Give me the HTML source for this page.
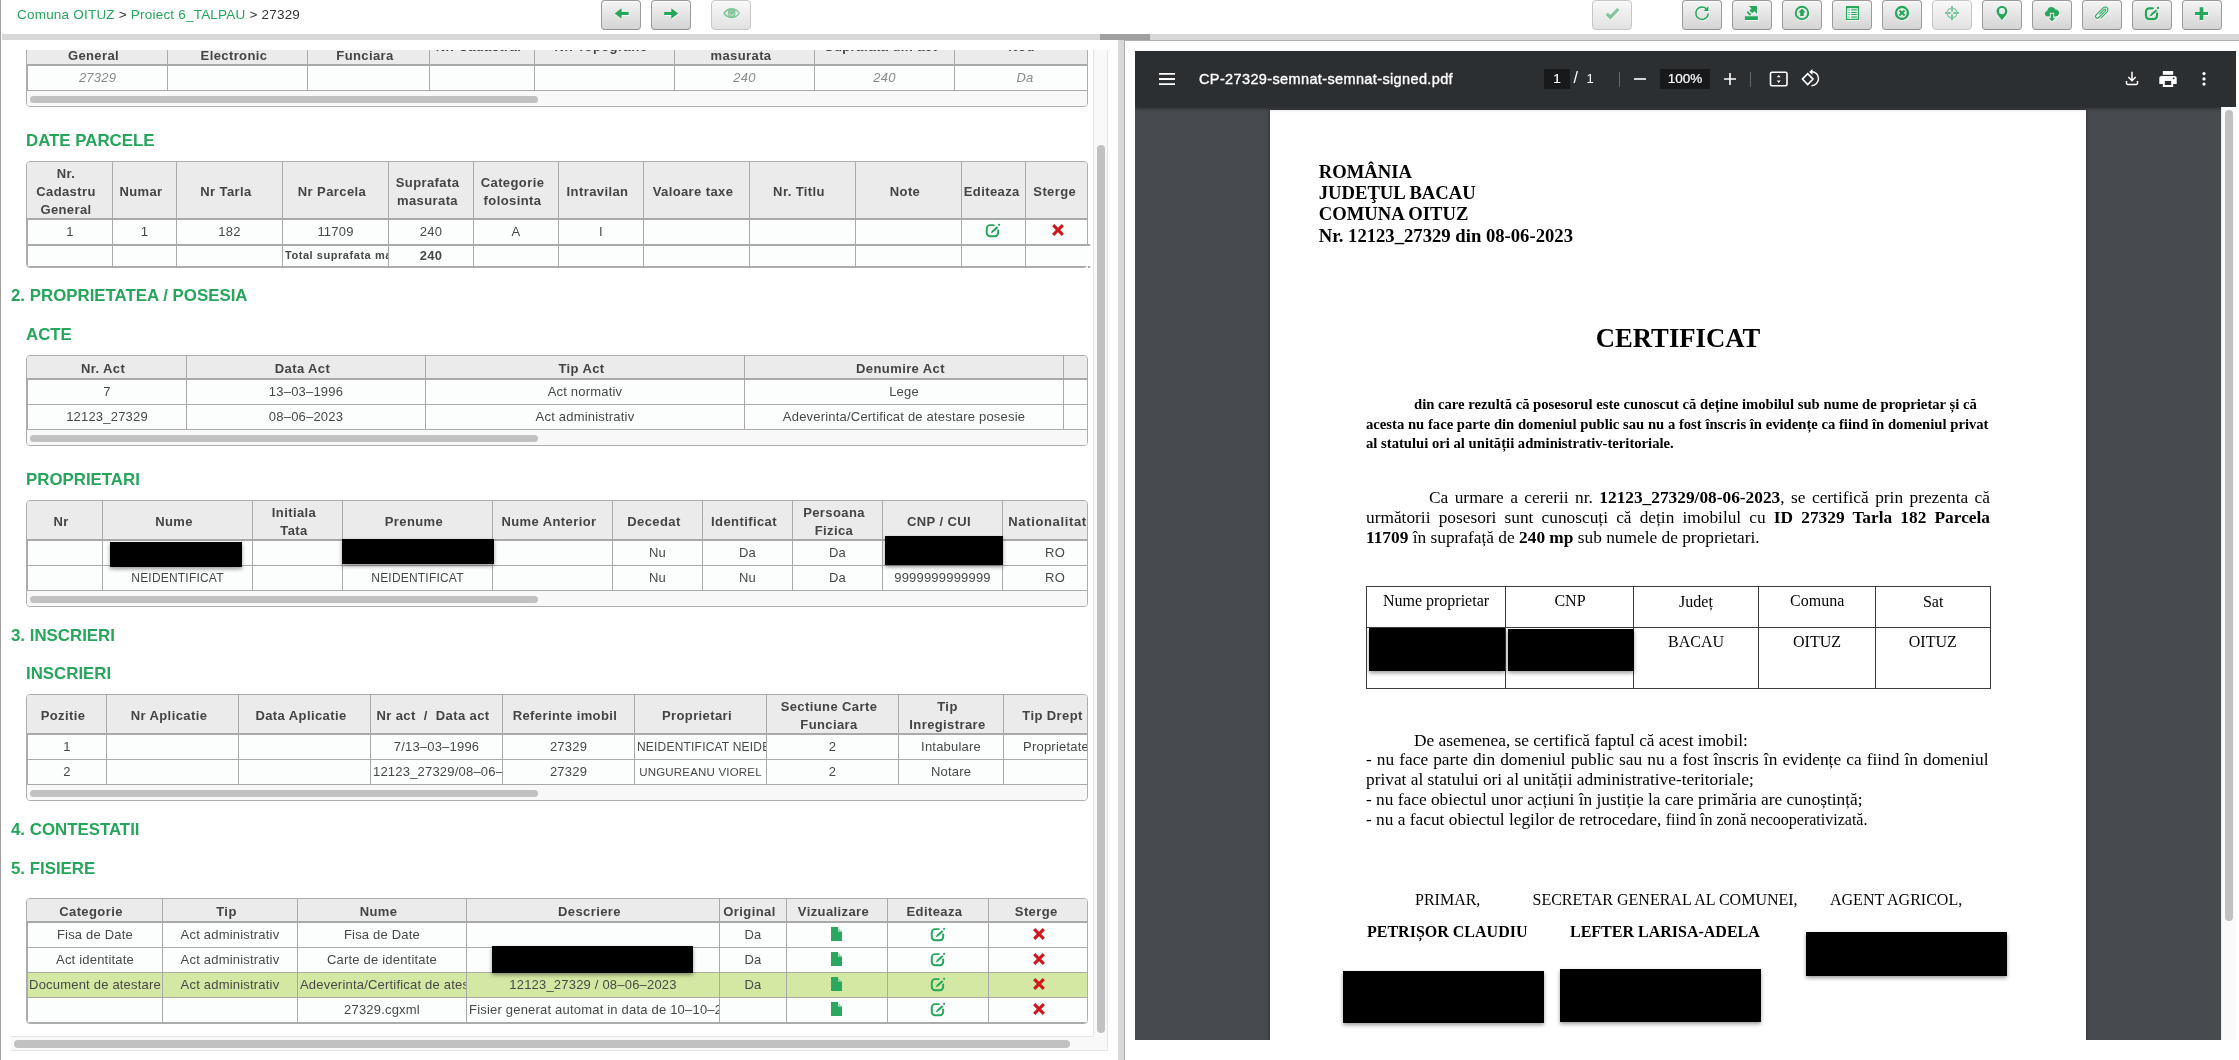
<!DOCTYPE html>
<html><head><meta charset="utf-8"><title>27329</title><style>
*{box-sizing:border-box;margin:0;padding:0}
html,body{width:2239px;height:1060px;overflow:hidden;background:#fff}
body{position:relative;font-family:"Liberation Sans",sans-serif;color:#444;font-size:13px}
.abs{position:absolute}
#root{position:absolute;left:0;top:0;width:2239px;height:1060px;overflow:hidden;will-change:transform}
#edge{left:0;top:0;width:1px;height:1060px;background:#a2a2a2}
#bc{left:17px;top:5px;height:20px;line-height:20px;font-size:13.5px;letter-spacing:.21px;white-space:pre;color:#333}
#bc b{font-weight:normal;color:#26a65b}
.btn{position:absolute;top:0;width:40px;height:30px;border:1px solid #9b9b9b;border-bottom-color:#909090;border-radius:4px;background:linear-gradient(#f4f4f4,#d4d4d4);box-shadow:inset 0 1px 0 rgba(255,255,255,.75)}
.btn.dis{border-color:#c6c6c6;background:linear-gradient(#f8f8f8,#e2e2e2)}
.btn svg{position:absolute;left:0;top:0;width:38px;height:28px;overflow:visible}
.btn.dis svg{opacity:.55}
#bar{left:2px;top:34px;width:2237px;height:6px;background:#d8d8d8}
#rtop{left:1124px;top:40px;width:1115px;height:1px;background:#b2b2b2}
#hand{left:1100px;top:34px;width:50px;height:6px;background:#a0a0a0}
#split{left:1118px;top:40px;width:7px;height:1020px;background:#d8d8d8;border-right:1px solid #adadad}
#pane{left:2px;top:50px;width:1091px;height:986px;overflow:hidden}
#vtrack{left:1093px;top:50px;width:15px;height:986px;background:#f9f9f9;border-left:1px solid #e4e4e4;border-right:1px solid #e4e4e4}
#vthumb{left:1097px;top:145px;width:8px;height:888px;border-radius:4px;background:#c1c1c1}
#htrack{left:11px;top:1036px;width:1082px;height:15px;background:#f9f9f9;border-top:1px solid #e4e4e4;border-bottom:1px solid #e4e4e4}
#corner{left:1093px;top:1036px;width:15px;height:15px;background:#f9f9f9;border-right:1px solid #e4e4e4;border-bottom:1px solid #e4e4e4}
#hthumb{left:14px;top:1040px;width:1056px;height:8px;border-radius:4px;background:#c1c1c1}
h2,h3{position:absolute;font-weight:bold;color:#26a65b;white-space:pre;line-height:20px;height:20px}
h2{font-size:16.85px;left:9px}
h3{font-size:16.85px;left:24px}
.tb{position:absolute;left:24px;width:1062px;border:1px solid #adadad;border-radius:4px;overflow:hidden;background:#f8f8f8}
.r{display:flex;width:1400px;background:#fcfdfd;border-bottom:1px solid #a9a9a9;border-left:1px solid #a9a9a9}
.r.h{background:#ebebeb;border-bottom:2px solid #a9a9a9;border-left:0}
.r.h .c{font-weight:bold;font-size:13px;letter-spacing:.4px;line-height:18px;color:#444;padding-top:4px;padding-bottom:0;padding-right:7px}
.r.b2{border-bottom-width:2px}
.r.f .c{font-weight:bold}
.r.last{border-bottom:0}
.r.hl{background:#d3e9a3}
.c{flex:none;border-right:1px solid #a9a9a9;display:flex;align-items:center;justify-content:center;text-align:center;white-space:pre;overflow:hidden;font-size:13px;letter-spacing:.2px;color:#484848;padding-bottom:1.5px}
.r.h .c.p35{padding-right:3.5px}
.r.up .ic{position:relative;top:-1px}
.c:last-child{border-right:0}
.c.l{justify-content:flex-start;padding-left:2px}
.r.i .c{font-style:italic;color:#8a8a8a}
.k{font-size:12px;padding-top:1px}
.sb{height:15px;position:relative;background:#f8f8f8}
.sb i{position:absolute;left:3px;top:5px;width:508px;height:7px;border-radius:4px;background:#c1c1c1}
.red{position:absolute;background:#000;box-shadow:0 2px 4px rgba(0,0,0,.4)}
/* pdf */
#pdf{left:1135px;top:51px;width:1101px;height:989px;background:#474a4e;overflow:hidden}
#ptb{left:0;top:0;width:1101px;height:56px;background:#2c2f32;box-shadow:0 1px 4px rgba(0,0,0,.5);color:#fff}
#pscr{left:1086px;top:56px;width:15px;height:933px;background:#fafafa;border-left:1px solid #e8e8e8}
#pthumb{left:1090px;top:59px;width:8px;height:811px;border-radius:4px;background:#c1c1c1}
#page{left:135px;top:59px;width:816px;height:1056px;background:#fff;box-shadow:0 0 4px rgba(0,0,0,.45);font-family:"Liberation Serif",serif;color:#000}
#page div,#page span.a{position:absolute;white-space:pre}

#ptb .t{position:absolute;white-space:pre;color:#fff;font-family:"Liberation Sans",sans-serif}
#ptb .box{position:absolute;top:18px;height:20px;background:#17191b;color:#fff;font-size:13.500px;line-height:20px;text-align:center;-webkit-text-stroke:.2px #fff}
#ptb .dv{position:absolute;top:21px;width:1px;height:15px;background:#63666a}
#ptb svg{position:absolute;overflow:visible}
#page .ln{line-height:24px;height:24px}
#page .j{white-space:normal;text-align:justify;text-align-last:justify}
#page b{font-weight:bold}
#ptab{left:96px;top:476px;width:625px;height:103px;border:1px solid #3c3c3c}
#ptab i{position:absolute;background:#3c3c3c;display:block}
</style></head><body><div id="root"><div id="edge" class="abs"></div>
<div id="bc" class="abs"><b>Comuna OITUZ</b> &gt; <b>Proiect 6_TALPAU</b> &gt; 27329</div>
<div class="btn" style="left:601px"><svg viewBox="0 0 38 28"><g transform="translate(0.6,0.9)" opacity=".85"><path d="M12.7 12.4L19.6 7.2v3.7h7.1v3.2h-7.1v3.7z" fill="#fff"/></g><path d="M12.7 12.4L19.6 7.2v3.7h7.1v3.2h-7.1v3.7z" fill="#26a65b"/></svg></div>
<div class="btn" style="left:651px"><svg viewBox="0 0 38 28"><g transform="translate(0.6,0.9)" opacity=".85"><path d="M26.2 12.4L19.3 7.2v3.7h-7.1v3.2h7.1v3.7z" fill="#fff"/></g><path d="M26.2 12.4L19.3 7.2v3.7h-7.1v3.2h7.1v3.7z" fill="#26a65b"/></svg></div>
<div class="btn dis" style="left:711px"><svg viewBox="0 0 38 28"><g transform="translate(0.6,0.9)" opacity=".85"><path d="M11 12.200C13.200 8.700 16.200 7 19.600 7s6.400 1.700 8.600 5.200c-2.200 3.400-5.200 5-8.600 5s-6.400-1.600-8.600-5z" fill="#fff"/><path d="M12.900 12.200C15 9.800 17.200 9 19.800 9S24.700 9.800 26.800 12.200C24.700 14.500 22.400 15.300 19.800 15.300S15 14.500 12.900 12.200Z" fill="#fff"/><circle cx="19.700" cy="12" r="3.900" fill="#fff"/><path d="M17.150 12.300A2.600 2.600 0 0 0 22.250 12.300" fill="none" stroke="#fff" stroke-width=".75"/><path d="M18.300 11.300A1.500 1.500 0 0 1 19.700 9.900" fill="none" stroke="#fff" stroke-width=".6" opacity=".8"/></g><path d="M11 12.200C13.200 8.700 16.200 7 19.600 7s6.400 1.700 8.600 5.200c-2.200 3.400-5.200 5-8.600 5s-6.400-1.600-8.600-5z" fill="#26a65b"/><path d="M12.900 12.200C15 9.800 17.200 9 19.800 9S24.700 9.800 26.800 12.200C24.700 14.500 22.400 15.300 19.800 15.300S15 14.500 12.900 12.200Z" fill="#eee"/><circle cx="19.700" cy="12" r="3.900" fill="#26a65b"/><path d="M17.150 12.300A2.600 2.600 0 0 0 22.250 12.300" fill="none" stroke="#eee" stroke-width=".75"/><path d="M18.300 11.300A1.500 1.500 0 0 1 19.700 9.900" fill="none" stroke="#eee" stroke-width=".6" opacity=".8"/></svg></div>
<div class="btn dis" style="left:1592px"><svg viewBox="0 0 38 28"><g transform="translate(0.6,0.9)" opacity=".85"><path d="M13.700 12.900L17.400 16.300 25.300 8" fill="none" stroke="#fff" stroke-width="3.200"/></g><path d="M13.700 12.900L17.400 16.300 25.300 8" fill="none" stroke="#26a65b" stroke-width="3.200"/></svg></div>
<div class="btn" style="left:1682px"><svg viewBox="0 0 38 28"><g transform="translate(0.6,0.9)" opacity=".85"><path d="M23.900 8.300A6.250 6.250 0 1 0 25.300 12.600" fill="none" stroke="#fff" stroke-width="1.500"/><path d="M25.400 5.300v4.800h-4.800z" fill="#fff"/></g><path d="M23.900 8.300A6.250 6.250 0 1 0 25.300 12.600" fill="none" stroke="#26a65b" stroke-width="1.500"/><path d="M25.400 5.300v4.800h-4.800z" fill="#26a65b"/></svg></div>
<div class="btn" style="left:1732px"><svg viewBox="0 0 38 28"><g transform="translate(0.6,0.9)" opacity=".85"><path d="M11.900 15.300h13v3.700H11.900z" fill="#fff"/><path d="M15.800 5h8.150v7.800L21.300 10.200 19.200 12.300 16.400 9.500 18.500 7.400z" fill="#fff"/><path d="M14.900 11.300l2.200 2.300" stroke="#fff" stroke-width="1.900" stroke-linecap="round" fill="none"/></g><path d="M11.900 15.300h13v3.700H11.900z" fill="#26a65b"/><path d="M15.800 5h8.150v7.800L21.300 10.200 19.200 12.300 16.400 9.500 18.500 7.400z" fill="#26a65b"/><path d="M14.900 11.300l2.200 2.300" stroke="#26a65b" stroke-width="1.900" stroke-linecap="round" fill="none"/></svg></div>
<div class="btn" style="left:1782px"><svg viewBox="0 0 38 28"><g transform="translate(0.6,0.9)" opacity=".85"><circle cx="19" cy="12" r="6.250" fill="none" stroke="#fff" stroke-width="1.900"/><path d="M19 7.600l3.600 3.900h-1.800v3.500h-3.600v-3.500h-1.800z" fill="#fff"/></g><circle cx="19" cy="12" r="6.250" fill="none" stroke="#26a65b" stroke-width="1.900"/><path d="M19 7.600l3.600 3.900h-1.800v3.500h-3.600v-3.500h-1.800z" fill="#26a65b"/></svg></div>
<div class="btn" style="left:1832px"><svg viewBox="0 0 38 28"><g transform="translate(0.6,0.9)" opacity=".85"><path d="M13 5h13v14H13z" fill="#fff"/><path d="M14.100 7.100h10.750v10.800H14.100z" fill="#fff"/><path d="M17.150 7.100h.7v10.800h-.7zM14.100 10h10.750v.8H14.100zM14.100 12.150h10.750v.8H14.100zM14.100 14.250h10.750v.8H14.100z" fill="#fff"/><path d="M18.200 8.100h5.600v1.700h-5.600zM18.200 15.200h5.600v1.700h-5.600z" fill="#fff"/><path d="M15.200 8.100h1.600v1.700h-1.600zM15.200 15.200h1.600v1.700h-1.600z" fill="#fff"/><path d="M18.200 11h5.600v1h-5.600zM18.200 13.100h5.600v1h-5.600z" fill="#fff"/><path d="M15.200 11h1.600v1h-1.600zM15.200 13.100h1.600v1h-1.600z" fill="#fff"/></g><path d="M13 5h13v14H13z" fill="#26a65b"/><path d="M14.100 7.100h10.750v10.800H14.100z" fill="#d2ecdf"/><path d="M17.150 7.100h.7v10.800h-.7zM14.100 10h10.750v.8H14.100zM14.100 12.150h10.750v.8H14.100zM14.100 14.250h10.750v.8H14.100z" fill="#f3f7f4"/><path d="M18.200 8.100h5.600v1.700h-5.600zM18.200 15.200h5.600v1.700h-5.600z" fill="#6dc394"/><path d="M15.200 8.100h1.600v1.700h-1.600zM15.200 15.200h1.600v1.700h-1.600z" fill="#a5d9bd"/><path d="M18.200 11h5.600v1h-5.600zM18.200 13.100h5.600v1h-5.600z" fill="#26a65b"/><path d="M15.200 11h1.600v1h-1.600zM15.200 13.100h1.600v1h-1.600z" fill="#5cbb86"/></svg></div>
<div class="btn" style="left:1882px"><svg viewBox="0 0 38 28"><g transform="translate(0.6,0.9)" opacity=".85"><circle cx="19" cy="12" r="6" fill="none" stroke="#fff" stroke-width="2.300"/><path d="M16.400 9.400l5.200 5.200M21.600 9.400l-5.200 5.200" stroke="#fff" stroke-width="2.100" fill="none"/></g><circle cx="19" cy="12" r="6" fill="none" stroke="#26a65b" stroke-width="2.300"/><path d="M16.400 9.400l5.200 5.200M21.600 9.400l-5.200 5.200" stroke="#26a65b" stroke-width="2.100" fill="none"/></svg></div>
<div class="btn dis" style="left:1932px"><svg viewBox="0 0 38 28"><g transform="translate(0.6,0.9)" opacity=".85"><circle cx="19" cy="12" r="4.800" fill="none" stroke="#fff" stroke-width="1.400"/><path d="M19 4.900v5.900M19 13.200v6M11.900 12h5.900M20.200 12h5.900" stroke="#fff" stroke-width="2" fill="none"/></g><circle cx="19" cy="12" r="4.800" fill="none" stroke="#26a65b" stroke-width="1.400"/><path d="M19 4.900v5.900M19 13.200v6M11.900 12h5.900M20.200 12h5.900" stroke="#26a65b" stroke-width="2" fill="none"/></svg></div>
<div class="btn" style="left:1982px"><svg viewBox="0 0 38 28"><g transform="translate(0.6,0.9)" opacity=".85"><path d="M19 4.900c3 0 5.400 2.400 5.400 5.300 0 1.300-.5 2.600-1.300 3.700L19 19.200l-4.100-5.300c-.8-1.100-1.300-2.400-1.300-3.700 0-2.900 2.400-5.300 5.400-5.300zm0 2.200a3.050 3.050 0 1 0 0 6.100 3.050 3.050 0 0 0 0-6.100z" fill="#fff" fill-rule="evenodd"/></g><path d="M19 4.900c3 0 5.400 2.400 5.400 5.300 0 1.300-.5 2.600-1.300 3.700L19 19.200l-4.100-5.300c-.8-1.100-1.300-2.400-1.300-3.700 0-2.900 2.400-5.300 5.400-5.300zm0 2.200a3.050 3.050 0 1 0 0 6.100 3.050 3.050 0 0 0 0-6.100z" fill="#26a65b" fill-rule="evenodd"/></svg></div>
<div class="btn" style="left:2032px"><svg viewBox="0 0 38 28"><g transform="translate(0.6,0.9)" opacity=".85"><path d="M15 15.600c-1.800 0-3.100-1.300-3.100-2.900 0-1.400 1-2.600 2.400-2.800.1-2.200 1.900-3.900 4.200-3.900 1.700 0 3.200 1 3.800 2.500 2.100 0 3.800 1.600 3.800 3.600 0 1.900-1.600 3.500-3.600 3.500z" fill="#fff"/><path d="M16.800 11.700h4.400v5.100h2.600L19 21.200l-4.800-4.400h2.600z" fill="#eaeaea"/><path d="M17.800 12.700h2.400v4.600h2L19 20.300l-3.200-3h2z" fill="#fff"/></g><path d="M15 15.600c-1.800 0-3.100-1.300-3.100-2.900 0-1.400 1-2.600 2.400-2.800.1-2.200 1.900-3.900 4.200-3.900 1.700 0 3.200 1 3.800 2.500 2.100 0 3.800 1.600 3.800 3.600 0 1.900-1.600 3.500-3.600 3.500z" fill="#26a65b"/><path d="M16.800 11.700h4.400v5.100h2.600L19 21.200l-4.800-4.400h2.600z" fill="#eaeaea"/><path d="M17.800 12.700h2.400v4.600h2L19 20.300l-3.200-3h2z" fill="#26a65b"/></svg></div>
<div class="btn" style="left:2082px"><svg viewBox="0 0 38 28"><g transform="translate(0.6,0.9)" opacity=".85"><path transform="translate(14.3,15.3) rotate(-45)" d="M1.300 3.800L10.200 3.800A2.800 2.800 0 0 0 10.200 -1.800L0 -1.800A1.870 1.870 0 0 0 0 1.940L9.900 1.940A.930 .930 0 0 0 9.900 .080L3.460 .080" fill="none" stroke="#fff" stroke-width="1.050" stroke-linecap="round"/></g><path transform="translate(14.3,15.3) rotate(-45)" d="M1.300 3.800L10.200 3.800A2.800 2.800 0 0 0 10.200 -1.800L0 -1.800A1.870 1.870 0 0 0 0 1.940L9.900 1.940A.930 .930 0 0 0 9.900 .080L3.460 .080" fill="none" stroke="#26a65b" stroke-width="1.050" stroke-linecap="round"/></svg></div>
<div class="btn" style="left:2132px"><svg viewBox="0 0 38 28"><g transform="translate(0.6,0.9)" opacity=".85"><path d="M19.800 7.300h-3.500a3.300 3.300 0 0 0-3.300 3.300v4.200a3.300 3.300 0 0 0 3.300 3.300h4.500a3.300 3.300 0 0 0 3.300-3.300v-2.400" fill="none" stroke="#fff" stroke-width="2.200" stroke-linecap="round"/><path d="M16.700 15.400l1.300-2.700 4.900-4.300 1.400 1.500-5 4.400z" fill="#fff"/><circle cx="25" cy="7" r="1.150" fill="#fff"/></g><path d="M19.800 7.300h-3.500a3.300 3.300 0 0 0-3.300 3.300v4.200a3.300 3.300 0 0 0 3.300 3.300h4.500a3.300 3.300 0 0 0 3.300-3.300v-2.400" fill="none" stroke="#26a65b" stroke-width="2.200" stroke-linecap="round"/><path d="M16.700 15.400l1.300-2.700 4.900-4.300 1.400 1.500-5 4.400z" fill="#26a65b"/><circle cx="25" cy="7" r="1.150" fill="#26a65b"/></svg></div>
<div class="btn" style="left:2182px"><svg viewBox="0 0 38 28"><g transform="translate(0.6,0.9)" opacity=".85"><path d="M16.650 6.200h3.700v4.800H25v3.100h-4.650v4.800h-3.700v-4.800H12V11h4.650z" fill="#fff"/></g><path d="M16.650 6.200h3.700v4.800H25v3.100h-4.650v4.800h-3.700v-4.800H12V11h4.650z" fill="#26a65b"/></svg></div>
<div id="bar" class="abs"></div><div id="rtop" class="abs"></div><div id="hand" class="abs"></div><div id="split" class="abs"></div>
<div id="pane" class="abs"><div class="tb" style="top:-25px"><div class="r h" style="height:40px"><div class="c " style="width:141px">Nr. Cadastru
General</div><div class="c " style="width:140px">Nr. Cadastru
Electronic</div><div class="c " style="width:122px">Nr. Carte
Funciara</div><div class="c " style="width:105px">Nr. Cadastral</div><div class="c " style="width:140px">Nr. Topografic</div><div class="c " style="width:140px">Suprafata
masurata</div><div class="c " style="width:140px">Suprafata din act</div><div class="c " style="width:140px">Nou</div></div><div class="r i" style="height:25px"><div class="c " style="width:140px">27329</div><div class="c " style="width:140px"></div><div class="c " style="width:122px"></div><div class="c " style="width:105px"></div><div class="c " style="width:140px"></div><div class="c " style="width:140px">240</div><div class="c " style="width:140px">240</div><div class="c " style="width:140px">Da</div></div><div class="sb"><i></i></div></div><h3 style="top:80.86px">DATE PARCELE</h3><div class="tb" style="top:111px"><div class="r h" style="height:58px"><div class="c " style="width:86px">Nr.
Cadastru
General</div><div class="c " style="width:64px">Numar</div><div class="c " style="width:106px">Nr Tarla</div><div class="c " style="width:106px">Nr Parcela</div><div class="c " style="width:85px">Suprafata
masurata</div><div class="c " style="width:85px">Categorie
folosinta</div><div class="c " style="width:85px">Intravilan</div><div class="c " style="width:106px">Valoare taxe</div><div class="c " style="width:106px">Nr. Titlu</div><div class="c " style="width:106px">Note</div><div class="c p35" style="width:64px">Editeaza</div><div class="c p35" style="width:61px">Sterge</div></div><div class="r b2 up" style="height:26px"><div class="c " style="width:85px">1</div><div class="c " style="width:64px">1</div><div class="c " style="width:106px">182</div><div class="c " style="width:106px">11709</div><div class="c " style="width:85px">240</div><div class="c " style="width:85px">A</div><div class="c " style="width:85px">I</div><div class="c " style="width:106px"></div><div class="c " style="width:106px"></div><div class="c " style="width:106px"></div><div class="c " style="width:64px"><svg class="ic" width="16" height="14.930" viewBox="11.5 5.5 15 14" style="margin-left:-1px;margin-top:.5px"><path d="M19.800 7.300h-3.500a3.300 3.300 0 0 0-3.300 3.300v4.200a3.300 3.300 0 0 0 3.300 3.300h4.500a3.300 3.300 0 0 0 3.300-3.300v-2.400" fill="none" stroke="#26a65b" stroke-width="1.900" stroke-linecap="round" transform="translate(.6 .45) scale(.965)"/><path d="M16.700 15.400l1.300-2.700 4.900-4.300 1.400 1.500-5 4.400z" fill="#26a65b" transform="translate(.6 .45) scale(.965)"/><circle cx="24.700" cy="7.200" r="1.050" fill="#26a65b"/></svg></div><div class="c " style="width:61px"><svg class="ic" width="14" height="14" viewBox="0 0 14 14" style="margin-left:2px"><path d="M2.200 2.200l9.600 9.600M11.800 2.200l-9.600 9.600" stroke="#d0171c" stroke-width="3.100" fill="none"/></svg></div></div><div class="r f" style="height:21px"><div class="c " style="width:85px"></div><div class="c " style="width:64px"></div><div class="c " style="width:106px"></div><div class="c l" style="width:106px"><span style="font-size:11px;letter-spacing:.55px">Total suprafata masurata</span></div><div class="c " style="width:85px">240</div><div class="c " style="width:85px"></div><div class="c " style="width:85px"></div><div class="c " style="width:106px"></div><div class="c " style="width:106px"></div><div class="c " style="width:106px"></div><div class="c " style="width:64px"></div><div class="c " style="width:61px"></div></div></div><div style="position:absolute;left:1085px;top:196px;width:1px;height:20px;background:#fcfdfd"></div><div style="position:absolute;left:1086px;top:194px;width:1.5px;height:2px;background:#a9a9a9"></div><div style="position:absolute;left:1086px;top:216px;width:1.5px;height:2px;background:#a9a9a9"></div><h2 style="top:236.36px">2. PROPRIETATEA / POSESIA</h2><h3 style="top:274.66px">ACTE</h3><div class="tb" style="top:305px"><div class="r h" style="height:24px"><div class="c " style="width:160px">Nr. Act</div><div class="c " style="width:239px">Data Act</div><div class="c " style="width:319px">Tip Act</div><div class="c " style="width:319px">Denumire Act</div><div class="c " style="width:100px"></div></div><div class="r " style="height:25px"><div class="c " style="width:159px">7</div><div class="c " style="width:239px">13–03–1996</div><div class="c " style="width:319px">Act normativ</div><div class="c " style="width:319px">Lege</div><div class="c " style="width:100px"></div></div><div class="r " style="height:25px"><div class="c " style="width:159px">12123_27329</div><div class="c " style="width:239px">08–06–2023</div><div class="c " style="width:319px">Act administrativ</div><div class="c " style="width:319px">Adeverinta/Certificat de atestare posesie</div><div class="c " style="width:100px"></div></div><div class="sb"><i></i></div></div><h3 style="top:419.86px">PROPRIETARI</h3><div class="tb" style="top:450px"><div class="r h" style="height:40px"><div class="c " style="width:76px">Nr</div><div class="c " style="width:150px">Nume</div><div class="c " style="width:90px">Initiala
Tata</div><div class="c " style="width:150px">Prenume</div><div class="c " style="width:120px">Nume Anterior</div><div class="c " style="width:90px">Decedat</div><div class="c " style="width:90px">Identificat</div><div class="c " style="width:90px">Persoana
Fizica</div><div class="c " style="width:120px">CNP / CUI</div><div class="c " style="width:104px"><span style="letter-spacing:.64px">Nationalitate</span></div></div><div class="r " style="height:25px"><div class="c " style="width:75px"></div><div class="c " style="width:150px"></div><div class="c " style="width:90px"></div><div class="c " style="width:150px"></div><div class="c " style="width:120px"></div><div class="c " style="width:90px">Nu</div><div class="c " style="width:90px">Da</div><div class="c " style="width:90px">Da</div><div class="c " style="width:120px"></div><div class="c " style="width:104px">RO</div></div><div class="r " style="height:25px"><div class="c " style="width:75px"></div><div class="c " style="width:150px"><span class="k">NEIDENTIFICAT</span></div><div class="c " style="width:90px"></div><div class="c " style="width:150px"><span class="k">NEIDENTIFICAT</span></div><div class="c " style="width:120px"></div><div class="c " style="width:90px">Nu</div><div class="c " style="width:90px">Nu</div><div class="c " style="width:90px">Da</div><div class="c " style="width:120px">9999999999999</div><div class="c " style="width:104px">RO</div></div><div class="sb"><i></i></div></div><h2 style="top:576.26px">3. INSCRIERI</h2><h3 style="top:613.86px">INSCRIERI</h3><div class="tb" style="top:644px"><div class="r h" style="height:40px"><div class="c " style="width:80px">Pozitie</div><div class="c " style="width:132px">Nr Aplicatie</div><div class="c " style="width:132px">Data Aplicatie</div><div class="c " style="width:132px">Nr act&nbsp; /&nbsp; Data act</div><div class="c " style="width:132px">Referinte imobil</div><div class="c " style="width:132px">Proprietari</div><div class="c " style="width:132px">Sectiune Carte
Funciara</div><div class="c " style="width:105px">Tip
Inregistrare</div><div class="c " style="width:104px">Tip Drept</div></div><div class="r " style="height:25px"><div class="c " style="width:79px">1</div><div class="c " style="width:132px"></div><div class="c " style="width:132px"></div><div class="c " style="width:132px">7/13–03–1996</div><div class="c " style="width:132px">27329</div><div class="c l" style="width:132px"><span class="k">NEIDENTIFICAT NEIDENTIFICAT</span></div><div class="c " style="width:132px">2</div><div class="c " style="width:105px">Intabulare</div><div class="c " style="width:104px">Proprietate</div></div><div class="r " style="height:25px"><div class="c " style="width:79px">2</div><div class="c " style="width:132px"></div><div class="c " style="width:132px"></div><div class="c l" style="width:132px">12123_27329/08–06–2023</div><div class="c " style="width:132px">27329</div><div class="c " style="width:132px"><span class="k" style="font-size:11.5px">UNGUREANU VIOREL</span></div><div class="c " style="width:132px">2</div><div class="c " style="width:105px">Notare</div><div class="c " style="width:104px"></div></div><div class="sb"><i></i></div></div><h2 style="top:770.06px">4. CONTESTATII</h2><h2 style="top:808.96px">5. FISIERE</h2><div class="tb" style="top:848px"><div class="r h" style="height:24px"><div class="c " style="width:136px">Categorie</div><div class="c " style="width:135px">Tip</div><div class="c " style="width:169px">Nume</div><div class="c " style="width:253px">Descriere</div><div class="c " style="width:67px">Original</div><div class="c " style="width:101px">Vizualizare</div><div class="c " style="width:101px">Editeaza</div><div class="c p35" style="width:98px">Sterge</div></div><div class="r " style="height:25px"><div class="c " style="width:135px">Fisa de Date</div><div class="c " style="width:135px">Act administrativ</div><div class="c " style="width:169px">Fisa de Date</div><div class="c " style="width:253px"></div><div class="c " style="width:67px">Da</div><div class="c " style="width:101px"><svg class="ic" width="11" height="14" viewBox="0 0 11 14" style="margin-left:-1px;margin-top:-1px"><path d="M0 0h7.200v4.600h3.800v9.400h-11z" fill="#2aa860"/><path d="M7.700 1.200v2.900h2.500z" fill="#7fcca3"/></svg></div><div class="c " style="width:101px"><svg class="ic" width="16" height="14.930" viewBox="11.5 5.5 15 14" style="margin-left:-1px;margin-top:.5px"><path d="M19.800 7.300h-3.500a3.300 3.300 0 0 0-3.300 3.300v4.200a3.300 3.300 0 0 0 3.300 3.300h4.500a3.300 3.300 0 0 0 3.300-3.300v-2.400" fill="none" stroke="#26a65b" stroke-width="1.900" stroke-linecap="round" transform="translate(.6 .45) scale(.965)"/><path d="M16.700 15.400l1.300-2.700 4.900-4.300 1.400 1.500-5 4.400z" fill="#26a65b" transform="translate(.6 .45) scale(.965)"/><circle cx="24.700" cy="7.200" r="1.050" fill="#26a65b"/></svg></div><div class="c " style="width:98px"><svg class="ic" width="14" height="14" viewBox="0 0 14 14" style="margin-left:2px"><path d="M2.200 2.200l9.600 9.600M11.800 2.200l-9.600 9.600" stroke="#d0171c" stroke-width="3.100" fill="none"/></svg></div></div><div class="r " style="height:25px"><div class="c " style="width:135px">Act identitate</div><div class="c " style="width:135px">Act administrativ</div><div class="c " style="width:169px">Carte de identitate</div><div class="c " style="width:253px"></div><div class="c " style="width:67px">Da</div><div class="c " style="width:101px"><svg class="ic" width="11" height="14" viewBox="0 0 11 14" style="margin-left:-1px;margin-top:-1px"><path d="M0 0h7.200v4.600h3.800v9.400h-11z" fill="#2aa860"/><path d="M7.700 1.200v2.900h2.500z" fill="#7fcca3"/></svg></div><div class="c " style="width:101px"><svg class="ic" width="16" height="14.930" viewBox="11.5 5.5 15 14" style="margin-left:-1px;margin-top:.5px"><path d="M19.800 7.300h-3.500a3.300 3.300 0 0 0-3.300 3.300v4.200a3.300 3.300 0 0 0 3.300 3.300h4.500a3.300 3.300 0 0 0 3.300-3.300v-2.400" fill="none" stroke="#26a65b" stroke-width="1.900" stroke-linecap="round" transform="translate(.6 .45) scale(.965)"/><path d="M16.700 15.400l1.300-2.700 4.900-4.300 1.400 1.500-5 4.400z" fill="#26a65b" transform="translate(.6 .45) scale(.965)"/><circle cx="24.700" cy="7.200" r="1.050" fill="#26a65b"/></svg></div><div class="c " style="width:98px"><svg class="ic" width="14" height="14" viewBox="0 0 14 14" style="margin-left:2px"><path d="M2.200 2.200l9.600 9.600M11.800 2.200l-9.600 9.600" stroke="#d0171c" stroke-width="3.100" fill="none"/></svg></div></div><div class="r hl" style="height:25px"><div class="c " style="width:135px">Document de atestare</div><div class="c " style="width:135px">Act administrativ</div><div class="c l" style="width:169px">Adeverinta/Certificat de atestare</div><div class="c " style="width:253px">12123_27329 / 08–06–2023</div><div class="c " style="width:67px">Da</div><div class="c " style="width:101px"><svg class="ic" width="11" height="14" viewBox="0 0 11 14" style="margin-left:-1px;margin-top:-1px"><path d="M0 0h7.200v4.600h3.800v9.400h-11z" fill="#2aa860"/><path d="M7.700 1.200v2.900h2.500z" fill="#7fcca3"/></svg></div><div class="c " style="width:101px"><svg class="ic" width="16" height="14.930" viewBox="11.5 5.5 15 14" style="margin-left:-1px;margin-top:.5px"><path d="M19.800 7.300h-3.500a3.300 3.300 0 0 0-3.300 3.300v4.200a3.300 3.300 0 0 0 3.300 3.300h4.500a3.300 3.300 0 0 0 3.300-3.300v-2.400" fill="none" stroke="#26a65b" stroke-width="1.900" stroke-linecap="round" transform="translate(.6 .45) scale(.965)"/><path d="M16.700 15.400l1.300-2.700 4.900-4.300 1.400 1.500-5 4.400z" fill="#26a65b" transform="translate(.6 .45) scale(.965)"/><circle cx="24.700" cy="7.200" r="1.050" fill="#26a65b"/></svg></div><div class="c " style="width:98px"><svg class="ic" width="14" height="14" viewBox="0 0 14 14" style="margin-left:2px"><path d="M2.200 2.200l9.600 9.600M11.800 2.200l-9.600 9.600" stroke="#d0171c" stroke-width="3.100" fill="none"/></svg></div></div><div class="r " style="height:25px"><div class="c " style="width:135px"></div><div class="c " style="width:135px"></div><div class="c " style="width:169px">27329.cgxml</div><div class="c l" style="width:253px">Fisier generat automat in data de 10–10–2023</div><div class="c " style="width:67px"></div><div class="c " style="width:101px"><svg class="ic" width="11" height="14" viewBox="0 0 11 14" style="margin-left:-1px;margin-top:-1px"><path d="M0 0h7.200v4.600h3.800v9.400h-11z" fill="#2aa860"/><path d="M7.700 1.200v2.900h2.500z" fill="#7fcca3"/></svg></div><div class="c " style="width:101px"><svg class="ic" width="16" height="14.930" viewBox="11.5 5.5 15 14" style="margin-left:-1px;margin-top:.5px"><path d="M19.800 7.300h-3.500a3.300 3.300 0 0 0-3.300 3.300v4.200a3.300 3.300 0 0 0 3.300 3.300h4.500a3.300 3.300 0 0 0 3.300-3.300v-2.400" fill="none" stroke="#26a65b" stroke-width="1.900" stroke-linecap="round" transform="translate(.6 .45) scale(.965)"/><path d="M16.700 15.400l1.300-2.700 4.900-4.300 1.400 1.500-5 4.400z" fill="#26a65b" transform="translate(.6 .45) scale(.965)"/><circle cx="24.700" cy="7.200" r="1.050" fill="#26a65b"/></svg></div><div class="c " style="width:98px"><svg class="ic" width="14" height="14" viewBox="0 0 14 14" style="margin-left:2px"><path d="M2.200 2.200l9.600 9.600M11.800 2.200l-9.600 9.600" stroke="#d0171c" stroke-width="3.100" fill="none"/></svg></div></div></div><div class="red" style="left:108px;top:492px;width:132px;height:25px"></div><div class="red" style="left:340px;top:489px;width:152px;height:25px"></div><div class="red" style="left:883px;top:486px;width:118px;height:29px"></div><div class="red" style="left:490px;top:896px;width:201px;height:27px"></div></div>
<div id="vtrack" class="abs"></div><div id="vthumb" class="abs"></div><div id="htrack" class="abs"></div><div id="corner" class="abs"></div><div id="hthumb" class="abs"></div>
<div id="pdf" class="abs"><div id="page" class="abs"><div class="ln" style="top:50.20px;font-size:18.67px;font-weight:bold;left:48.7px;">ROMÂNIA</div><div class="ln" style="top:71.20px;font-size:18.67px;font-weight:bold;left:48.7px;">JUDEŢUL BACAU</div><div class="ln" style="top:92.20px;font-size:18.67px;font-weight:bold;left:48.7px;">COMUNA OITUZ</div><div class="ln" style="top:114.20px;font-size:18.67px;font-weight:bold;left:48.7px;">Nr. 12123_27329 din 08-06-2023</div><div class="ln" style="top:215.50px;font-size:26.67px;font-weight:bold;left:108px;width:600px;text-align:center;">CERTIFICAT</div><div class="ln" style="top:282.05px;font-size:14.67px;font-weight:bold;left:144px;">din care rezultă că posesorul este cunoscut că deține imobilul sub nume de proprietar și că</div><div class="ln j" style="top:302.05px;font-size:14.67px;font-weight:bold;left:96px;width:622.5px;">acesta nu face parte din domeniul public sau nu a fost înscris în evidențe ca fiind în domeniul privat</div><div class="ln" style="top:320.55px;font-size:14.67px;font-weight:bold;left:96px;">al statului ori al unității administrativ-teritoriale.</div><div class="ln j" style="top:376.15px;font-size:17.33px;left:159px;width:561px;">Ca urmare a cererii nr. <b>12123_27329/08-06-2023</b>, se certifică prin prezenta că</div><div class="ln j" style="top:396.15px;font-size:17.33px;left:96px;width:624px;">următorii posesori sunt cunoscuți că dețin imobilul cu <b>ID 27329 Tarla 182 Parcela</b></div><div class="ln" style="top:415.65px;font-size:17.33px;left:96px;"><b>11709</b> în suprafață de <b>240 mp</b> sub numele de proprietari.</div><div id="ptab"><i style="left:0;top:40px;width:623px;height:1px"></i><i style="left:138px;top:0;width:1px;height:101px"></i><i style="left:266px;top:0;width:1px;height:101px"></i><i style="left:391px;top:0;width:1px;height:101px"></i><i style="left:508px;top:0;width:1px;height:101px"></i></div><div class="ln" style="top:478.60px;font-size:16px;left:-134px;width:600px;text-align:center;">Nume proprietar</div><div class="ln" style="top:478.60px;font-size:16px;left:0px;width:600px;text-align:center;">CNP</div><div class="ln" style="top:479.60px;font-size:16px;left:126px;width:600px;text-align:center;">Județ</div><div class="ln" style="top:478.60px;font-size:16px;left:247.20000000000005px;width:600px;text-align:center;">Comuna</div><div class="ln" style="top:479.60px;font-size:16px;left:363.20000000000005px;width:600px;text-align:center;">Sat</div><div class="ln" style="top:519.60px;font-size:16px;left:126px;width:600px;text-align:center;">BACAU</div><div class="ln" style="top:519.60px;font-size:16px;left:247px;width:600px;text-align:center;">OITUZ</div><div class="ln" style="top:519.60px;font-size:16px;left:362.79999999999995px;width:600px;text-align:center;">OITUZ</div><div class="ln" style="top:619.15px;font-size:17.33px;left:144px;">De asemenea, se certifică faptul că acest imobil:</div><div class="ln j" style="top:638.15px;font-size:17.33px;left:96px;width:622.5px;">- nu face parte din domeniul public sau nu a fost înscris în evidențe ca fiind în domeniul</div><div class="ln" style="top:658.15px;font-size:17.33px;left:96px;">privat al statului ori al unității administrative-teritoriale;</div><div class="ln" style="top:678.15px;font-size:17.33px;left:96px;">- nu face obiectul unor acțiuni în justiție la care primăria are cunoștință;</div><div class="ln" style="top:698.15px;font-size:17.33px;left:96px;">- nu a facut obiectul legilor de retrocedare, <span style="font-size:16px">fiind în zonă necooperativizată.</span></div><div class="ln" style="top:777.60px;font-size:16px;left:145px;">PRIMAR,</div><div class="ln" style="top:777.60px;font-size:16px;left:262.5px;">SECRETAR GENERAL AL COMUNEI,</div><div class="ln" style="top:777.60px;font-size:16px;left:560px;">AGENT AGRICOL,</div><div class="ln" style="top:810.10px;font-size:16px;font-weight:bold;left:97px;">PETRIȘOR CLAUDIU</div><div class="ln" style="top:810.10px;font-size:16px;font-weight:bold;left:300px;">LEFTER LARISA-ADELA</div><div class="red" style="left:99px;top:518px;width:136px;height:43px"></div><div class="red" style="left:238px;top:519px;width:126px;height:42px"></div><div class="red" style="left:536px;top:822px;width:201px;height:44px"></div><div class="red" style="left:73px;top:861px;width:201px;height:52px"></div><div class="red" style="left:290px;top:859px;width:201px;height:53px"></div></div><div id="ptb" class="abs"><svg style="left:24px;top:20px" width="16" height="16"><path d="M0 2.900h16M0 8h16M0 13.100h16" stroke="#fff" stroke-width="1.800"/></svg><div class="t" style="left:64px;top:18px;line-height:20px;font-size:14.5px;letter-spacing:.37px;-webkit-text-stroke:.35px #fff">CP-27329-semnat-semnat-signed.pdf</div><div class="box" style="left:409px;width:26px">1</div><div class="t" style="left:438.500px;top:17px;line-height:20px;font-size:16px">/</div><div class="t" style="left:451.5px;top:18px;line-height:20px;font-size:13px">1</div><div class="dv" style="left:484px"></div><svg style="left:499px;top:22px" width="12" height="12"><path d="M0 6h12" stroke="#fff" stroke-width="1.6"/></svg><div class="box" style="left:525px;width:50px">100%</div><svg style="left:589px;top:22px" width="12" height="12"><path d="M0 6h12M6 0v12" stroke="#fff" stroke-width="1.6"/></svg><div class="dv" style="left:615px"></div><svg style="left:634px;top:20px" width="20" height="16"><rect x="1.500" y="1.200" width="16.500" height="13.500" rx="1.500" fill="none" stroke="#fff" stroke-width="1.600"/><path d="M9.750 3.900l2 2.400h-4zM9.750 12l2-2.400h-4z" fill="#fff"/></svg><svg style="left:666px;top:19px" width="20" height="18"><path d="M6.700 3.600l5.300 5.500-5.300 5.500-5.300-5.500z" fill="none" stroke="#fff" stroke-width="1.600"/><path d="M10.200 1.800c4-.4 7.300 2.800 7.300 6.700 0 3.900-3 7-7 7.200" fill="none" stroke="#fff" stroke-width="1.500"/><path d="M11.500 -1l-3.400 2.900 3.400 2.900z" fill="#fff"/></svg><svg style="left:990px;top:20px" width="14" height="15"><path d="M7 .8v8.500M3.300 6l3.700 3.700L10.700 6M1.500 10v2.200c0 .8.600 1.400 1.400 1.400h8.200c.8 0 1.400-.6 1.400-1.400V10" fill="none" stroke="#fff" stroke-width="1.500"/></svg><svg style="left:1024px;top:20px" width="18" height="16"><path d="M3.800 0h10.400v3.800H3.800z" fill="#fff"/><path d="M2.500 4.900h13a2.200 2.200 0 0 1 2.200 2.200v5.800h-3.500v3.100H3.800v-3.100H.3V7.100a2.200 2.200 0 0 1 2.200-2.200zM5.800 10v4h6.400v-4z" fill="#fff" fill-rule="evenodd"/><circle cx="14.700" cy="7.300" r=".9" fill="#2c2f32"/></svg><svg style="left:1066px;top:20px" width="6" height="16"><circle cx="3" cy="2.600" r="1.600" fill="#fff"/><circle cx="3" cy="7.900" r="1.600" fill="#fff"/><circle cx="3" cy="13.100" r="1.600" fill="#fff"/></svg></div><div id="pscr" class="abs"></div><div id="pthumb" class="abs"></div></div></div></body></html>
